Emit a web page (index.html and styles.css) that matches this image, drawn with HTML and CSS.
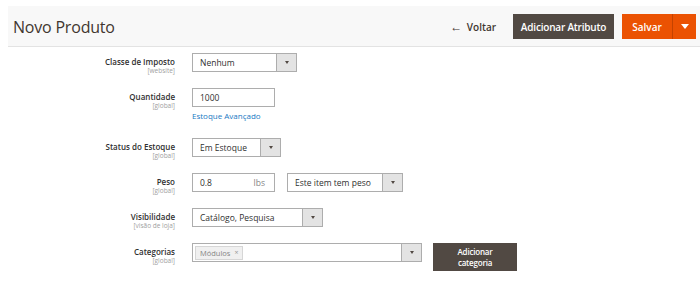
FILE: index.html
```html
<!DOCTYPE html>
<html lang="pt-BR">
<head>
    <meta charset="UTF-8">
    <title>Novo Produto</title>
    <link rel="stylesheet" href="styles.css">
</head>
<body>
    <div class="page-top"></div>
    <header class="page-header">
        <h1 class="page-title">Novo Produto</h1>
        <div class="page-actions">
            <a class="back-link" href="#"><span class="back-arrow">&larr;</span> Voltar</a>
            <button class="btn btn-dark">Adicionar Atributo</button>
            <div class="btn-split">
                <button class="btn btn-primary">Salvar</button>
                <button class="btn btn-primary btn-toggle">
                    <svg width="8" height="5" viewBox="0 0 8 5"><path d="M0 0h8L4 5z" fill="#fff"/></svg>
                </button>
            </div>
        </div>
    </header>

    <form class="product-form">
        <div class="field">
            <div class="field-label">Classe de Imposto<span class="scope">[website]</span></div>
            <div class="field-control">
                <div class="select w-105">Nenhum<span class="select-arrow"></span></div>
            </div>
        </div>

        <div class="field">
            <div class="field-label">Quantidade<span class="scope">[global]</span></div>
            <div class="field-control">
                <div class="input w-83">1000</div>
                <a class="field-link" href="#">Estoque Avançado</a>
            </div>
        </div>

        <div class="field">
            <div class="field-label">Status do Estoque<span class="scope">[global]</span></div>
            <div class="field-control">
                <div class="select w-89">Em Estoque<span class="select-arrow"></span></div>
            </div>
        </div>

        <div class="field">
            <div class="field-label">Peso<span class="scope">[global]</span></div>
            <div class="field-control row">
                <div class="input w-83 with-addon">0.8<span class="addon">lbs</span></div>
                <div class="select w-116">Este item tem peso<span class="select-arrow"></span></div>
            </div>
        </div>

        <div class="field">
            <div class="field-label">Visibilidade<span class="scope">[visão de loja]</span></div>
            <div class="field-control">
                <div class="select w-131">Catálogo, Pesquisa<span class="select-arrow"></span></div>
            </div>
        </div>

        <div class="field">
            <div class="field-label">Categorias<span class="scope">[global]</span></div>
            <div class="field-control row">
                <div class="select multi w-230">
                    <span class="tag">Módulos <span class="tag-x">&times;</span></span>
                    <span class="select-arrow"></span>
                </div>
                <button type="button" class="btn btn-dark btn-cat">Adicionar<br>categoria</button>
            </div>
        </div>
    </form>
</body>
</html>
```

FILE: styles.css
```css
* {
    margin: 0;
    padding: 0;
    box-sizing: border-box;
}
body {
    font-family: "Open Sans", "Liberation Sans", sans-serif;
    color: #303030;
    background: #fff;
}
.page-top {
    height: 6px;
}
.page-header {
    margin-left: 8px;
    height: 41px;
    background: #f8f8f8;
    border-bottom: 1px solid #e3e3e3;
    display: flex;
    align-items: center;
    justify-content: space-between;
    padding: 0 4px 0 5px;
}
.page-title {
    font-size: 16px;
    font-weight: 400;
    letter-spacing: -0.2px;
    color: #41362f;
    margin-top: 1px;
}
.page-actions {
    display: flex;
    align-items: center;
    margin-top: 1px;
}
.back-link {
    color: #41362f;
    text-decoration: none;
    font-size: 10px;
    font-weight: 600;
    margin-right: 17px;
}
.back-arrow {
    font-size: 12px;
    margin-right: 2px;
}
.btn {
    border: none;
    font-family: inherit;
    font-size: 10px;
    font-weight: 600;
    color: #fff;
    height: 25px;
    white-space: nowrap;
    cursor: pointer;
}
.btn-dark {
    background: #514943;
    border: 1px solid #514943;
    padding: 0;
    width: 101px;
    letter-spacing: -0.2px;
}
.btn-split {
    display: flex;
    margin-left: 8px;
}
.btn-primary {
    background: #eb5202;
    width: 50px;
}
.btn-toggle {
    width: 24px;
    border-left: 1px solid #c44300;
    display: flex;
    align-items: center;
    justify-content: center;
}

.product-form {
    padding-top: 6px;
    display: flex;
    flex-direction: column;
    gap: 16px;
}
.field {
    display: grid;
    grid-template-columns: 175px auto;
    column-gap: 17px;
    align-items: start;
}
.field-label {
    height: 19px;
    text-align: right;
    font-size: 8px;
    font-weight: 600;
    color: #303030;
    padding-top: 4px;
    line-height: 10px;
}
.scope {
    display: block;
    font-size: 6.5px;
    font-weight: 400;
    color: #a0a0a0;
    line-height: 7px;
}
.field-control {
    display: flex;
    flex-direction: column;
    align-items: flex-start;
}
.field-control.row {
    flex-direction: row;
    gap: 12px;
}
.input,
.select {
    position: relative;
    height: 19px;
    border: 1px solid #adadad;
    background: #fff;
    font-size: 8.5px;
    color: #303030;
    padding: 0 7px;
    display: flex;
    align-items: center;
}
.select-arrow {
    position: absolute;
    top: 0;
    right: 0;
    width: 20px;
    height: 100%;
    background: #e3e3e3;
    border-left: 1px solid #adadad;
}
.select-arrow::after {
    content: "";
    position: absolute;
    left: 8px;
    top: 7px;
    border-left: 2px solid transparent;
    border-right: 2px solid transparent;
    border-top: 3px solid #514943;
}
.with-addon {
    justify-content: space-between;
}
.addon {
    color: #858585;
    padding-right: 2px;
}
.field-link {
    margin-top: 3px;
    font-size: 8px;
    color: #1979c3;
    text-decoration: none;
    line-height: 12px;
}
.w-83 { width: 83px; }
.w-89 { width: 89px; }
.w-105 { width: 105px; }
.w-116 { width: 116px; }
.w-131 { width: 131px; }
.w-230 { width: 230px; }
.select.multi {
    padding: 0 2px;
}
.tag {
    background: #f0f0f0;
    border: 1px solid #d6d6d6;
    color: #858585;
    font-size: 7.5px;
    height: 14px;
    padding: 0 4px;
    display: flex;
    align-items: center;
    gap: 4px;
}
.tag-x {
    font-size: 7px;
    color: #999;
}
.btn-cat {
    width: 84px;
    height: 28px;
    font-size: 8px;
    line-height: 11px;
    margin-left: -1px;
    white-space: normal;
}
```
